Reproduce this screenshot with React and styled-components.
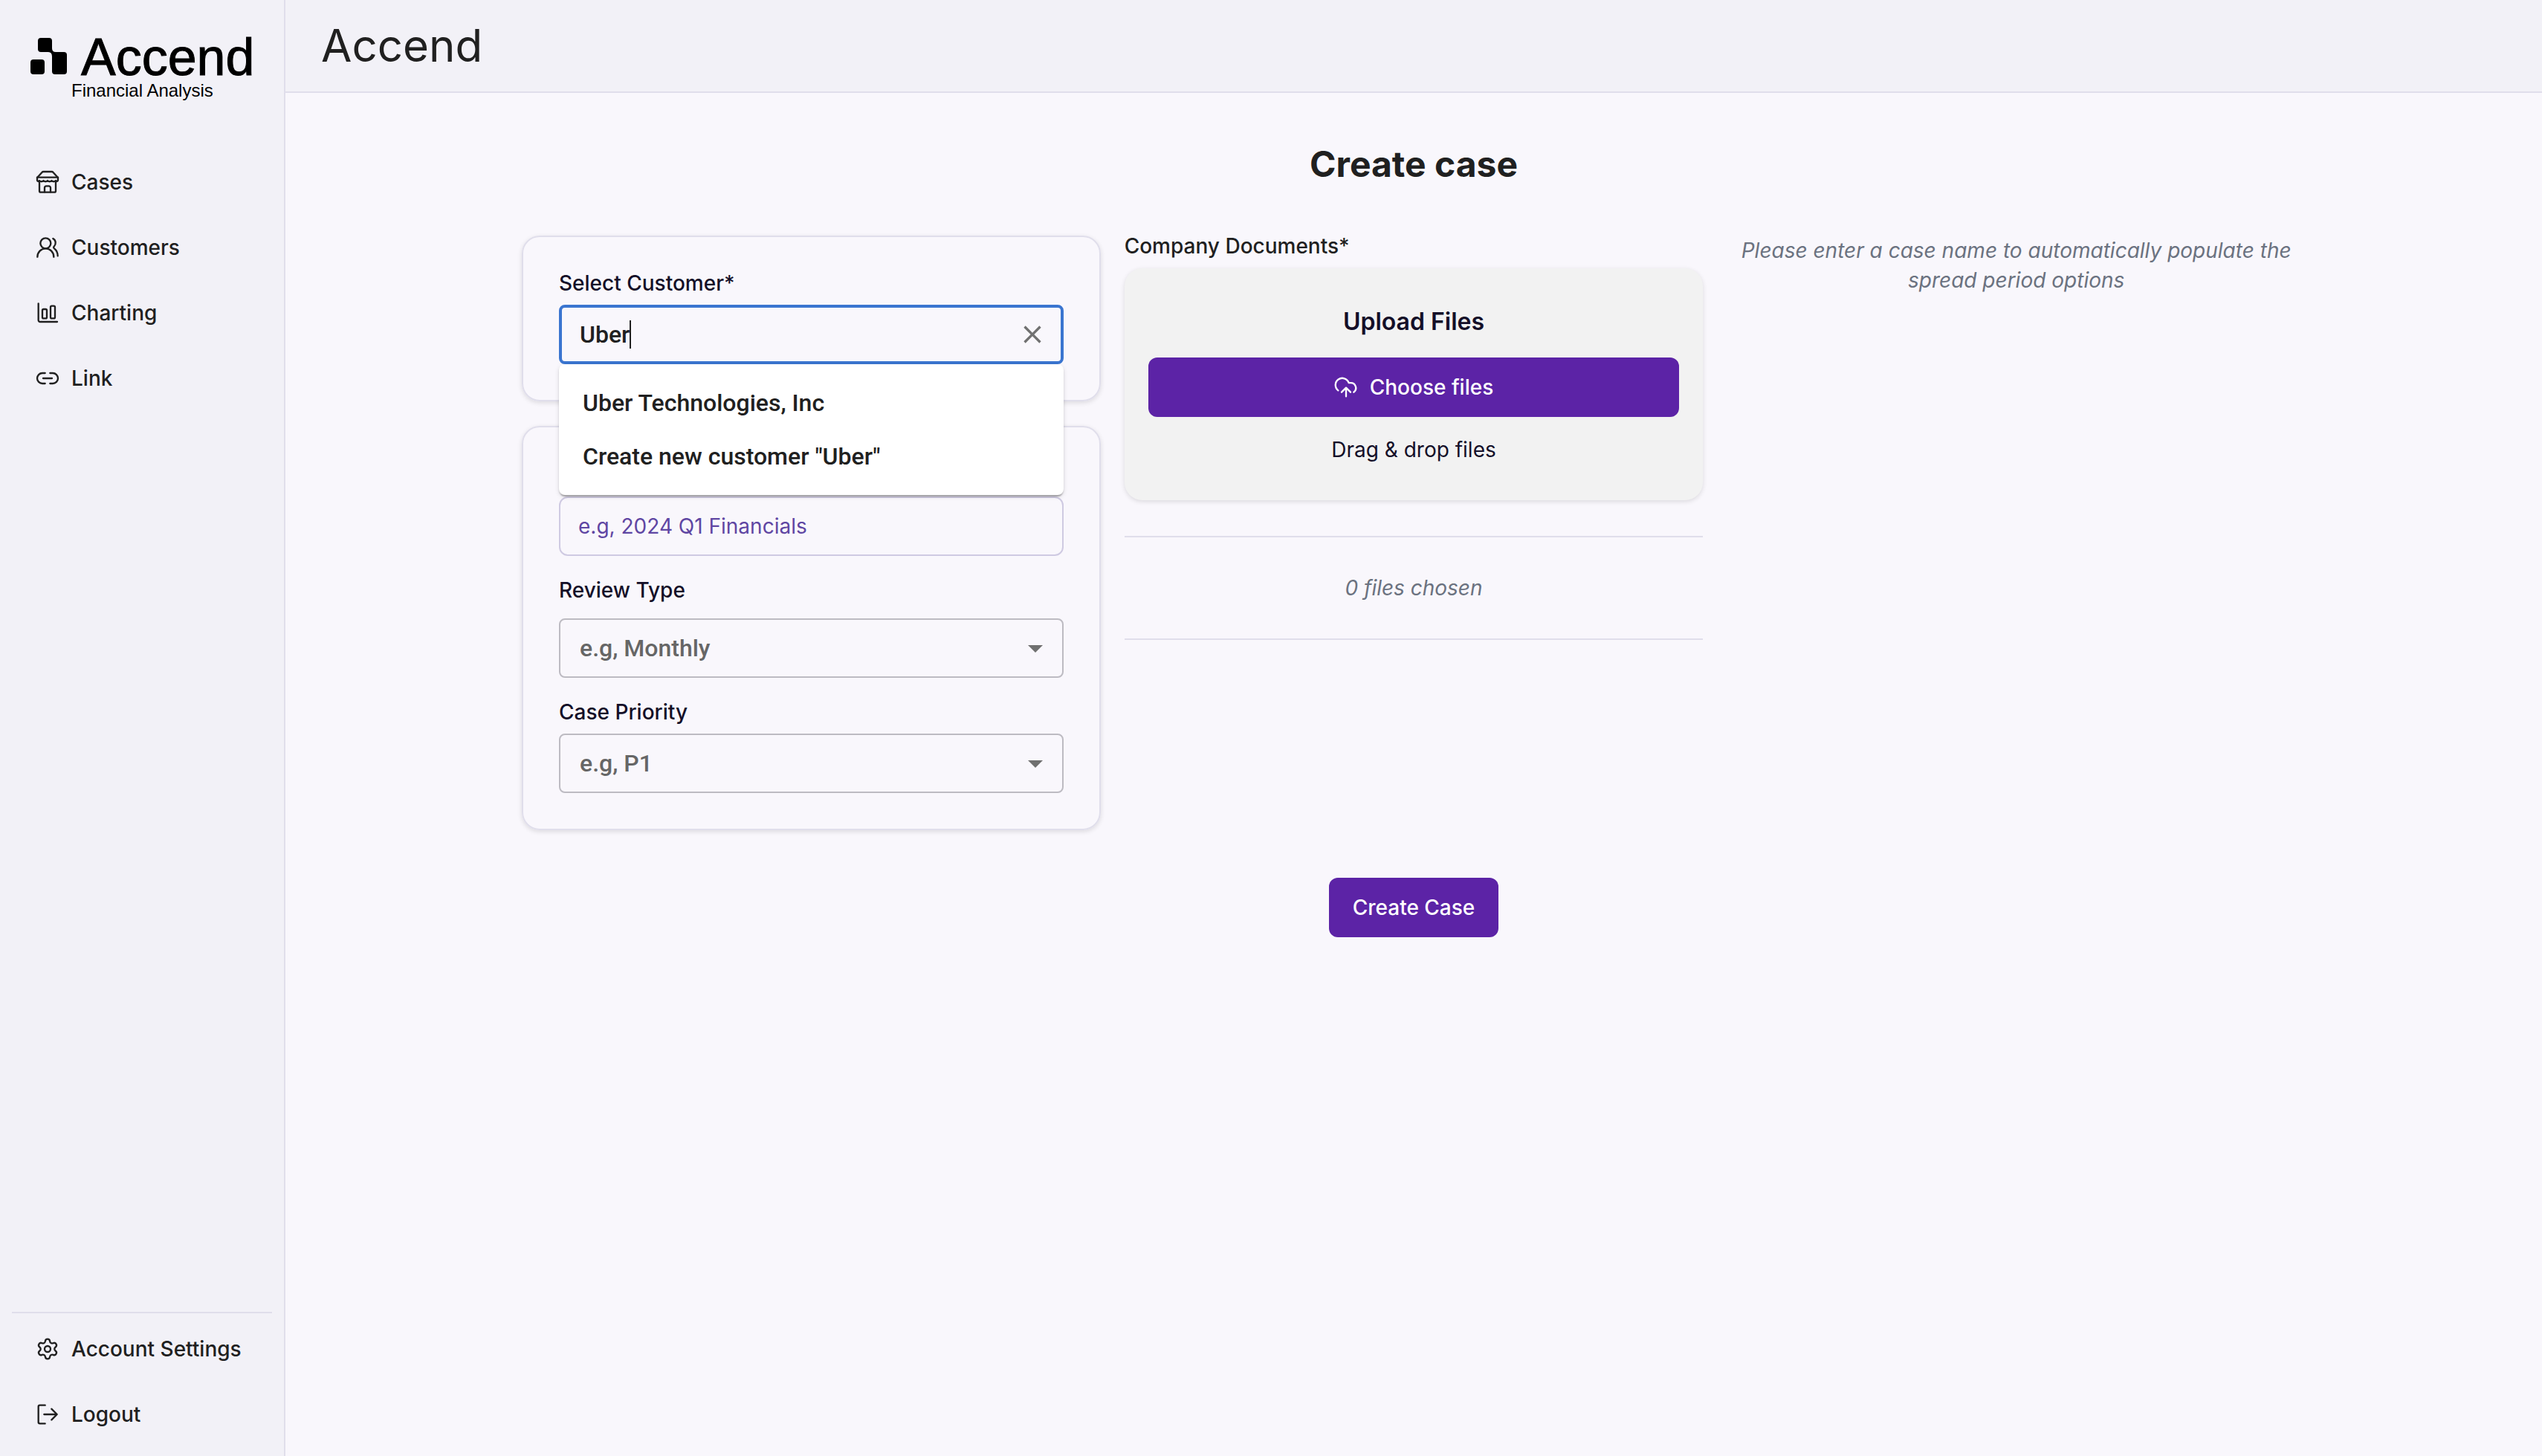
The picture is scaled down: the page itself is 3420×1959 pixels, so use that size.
import React, { useState } from "react";
import styled, { createGlobalStyle } from "styled-components";
import { Settings } from "lucide-react";

const GlobalStyle = createGlobalStyle`
  *, *::before, *::after { box-sizing: border-box; }
  body {
    margin: 0;
    background: #f9f7fc;
    color: #202020;
    font-family: Inter, "Liberation Sans", sans-serif;
    font-size: 28px;
    line-height: 40px;
    font-optical-sizing: none;
  }
  h1, h2, h3, p, ul { margin: 0; padding: 0; }
  input, button, select { font: inherit; font-optical-sizing: none; }
`;

const Shell = styled.div`
  display: flex;
  min-height: 100vh;
`;

const Sidebar = styled.aside`
  display: flex;
  flex-direction: column;
  flex: none;
  width: 384px;
  padding: 48px 16px 24px;
  background: #f2f1f7;
  border-right: 2px solid #e0deeb;
`;

const Brand = styled.div`
  display: grid;
  grid-template-columns: 50px 1fr;
  grid-template-rows: 60px 28px;
  column-gap: 19px;
  padding: 0 24px;
  color: #000;
`;

const BrandName = styled.span`
  font-family: "Liberation Sans", Arial, sans-serif;
  font-size: 70px;
  line-height: 58px;
  -webkit-text-stroke: 1px #000;
`;

const BrandTag = styled.span`
  grid-column: 1 / -1;
  padding-left: 56px;
  font-family: "Liberation Sans", Arial, sans-serif;
  font-size: 24px;
  line-height: 28px;
  white-space: nowrap;
`;

const NavList = styled.nav`
  display: flex;
  flex-direction: column;
  gap: 24px;
  padding: ${(p) => (p.$footer ? "16px 0 0" : "0")};
  margin-top: ${(p) => (p.$footer ? "auto" : "77px")};
  border-top: ${(p) => (p.$footer ? "2px solid #e0deeb" : "none")};
`;

const NavLink = styled.a`
  display: flex;
  align-items: center;
  gap: 16px;
  height: 64px;
  padding: 0 32px;
  color: #202020;
  font-weight: 500;
  text-decoration: none;
  white-space: nowrap;
`;

const Icon = styled.svg.attrs({ viewBox: "0 0 24 24", "aria-hidden": true })`
  flex: none;
  width: 32px;
  height: 32px;
  fill: none;
  stroke: currentColor;
  stroke-width: 1.75;
  stroke-linecap: round;
  stroke-linejoin: round;
`;

const Glyph = styled.svg.attrs({ viewBox: "0 0 24 24", "aria-hidden": true })`
  flex: none;
  width: ${(p) => p.$size}px;
  height: ${(p) => p.$size}px;
  fill: currentColor;
`;

const Main = styled.main`
  display: flex;
  flex-direction: column;
  flex: 1;
  min-width: 0;
`;

const TopBar = styled.header`
  padding: 24px 48px;
  background: #f2f1f7;
  border-bottom: 2px solid #e0deeb;
`;

const AppTitle = styled.h1`
  font-size: 60px;
  font-weight: 400;
  line-height: 75px;
`;

const Content = styled.form`
  display: flex;
  flex-direction: column;
  align-items: center;
  padding: 64px;
`;

const PageTitle = styled.h2`
  font-size: 48px;
  font-weight: 700;
  line-height: 64px;
`;

const Columns = styled.div`
  display: grid;
  grid-template-columns: repeat(3, 1fr);
  gap: 32px;
  width: 100%;
  max-width: 2400px;
  margin: 64px 0;
`;

const Stack = styled.div`
  display: flex;
  flex-direction: column;
  gap: 33px;
`;

const Card = styled.section`
  display: flex;
  flex-direction: column;
  padding: 46px 48px 48px;
  border: 2px solid #e0deeb;
  border-radius: 24px;
  box-shadow: 0 2px 6px rgba(0, 0, 0, 0.12);
`;

const Field = styled.div`
  position: relative;
  display: flex;
  flex-direction: column;
  gap: ${(p) => p.$gap || 13}px;
  margin-bottom: ${(p) => p.$after || 0}px;
`;

const Label = styled.label`
  color: #140f28;
  font-weight: 500;
  line-height: 32px;
`;

const Control = styled.div`
  display: flex;
  align-items: center;
  height: 80px;
  padding: ${(p) => (p.$focused ? "0 18px 0 24px" : "0 12px 0 26px")};
  border: ${(p) => (p.$focused ? "4px solid #3a75d0" : "2px solid #bdbbc2")};
  border-radius: 8px;
  color: #707070;
`;

const Combo = styled.input`
  field-sizing: content;
  min-width: 0;
  padding: 0;
  border: 0;
  outline: 0;
  background: transparent;
  color: #202020;
  caret-color: transparent;
  font-family: Roboto, Inter, sans-serif;
  font-size: 32px;
  font-weight: 500;
`;

const Caret = styled.span`
  flex: none;
  width: 2px;
  height: 38px;
  background: #202020;
`;

const Select = styled.select`
  flex: 1;
  min-width: 0;
  padding: 0;
  border: 0;
  outline: 0;
  appearance: none;
  background: transparent;
  color: #666;
  font-family: Roboto, Inter, sans-serif;
  font-size: 32px;
  font-weight: 500;
`;

const TextInput = styled.input`
  width: 100%;
  height: 80px;
  padding: 0 24px;
  border: 2px solid #cfcae2;
  border-radius: 12px;
  outline: 0;
  background: transparent;
  color: #202020;

  &::placeholder {
    color: #5f46a3;
    opacity: 1;
  }
`;

const ClearButton = styled.button`
  display: flex;
  margin-left: auto;
  padding: 0;
  border: 0;
  background: none;
  color: #707070;
`;

const Options = styled.ul`
  position: absolute;
  top: 100%;
  left: 0;
  right: 0;
  z-index: 2;
  padding: 16px 0;
  border-radius: 8px;
  background: #fff;
  box-shadow: 0 4px 2px -2px rgba(0, 0, 0, 0.2), 0 2px 2px rgba(0, 0, 0, 0.14),
    0 2px 6px rgba(0, 0, 0, 0.12);
  list-style: none;
`;

const Option = styled.li`
  padding: 12px 32px;
  font-family: Roboto, Inter, sans-serif;
  font-size: 32px;
  font-weight: 500;
  line-height: 48px;
`;

const Documents = styled.div`
  display: flex;
  flex-direction: column;
`;

const DocumentsTitle = styled.h3`
  font-size: 28px;
  font-weight: 500;
  line-height: 28px;
`;

const DropZone = styled.section`
  display: flex;
  flex-direction: column;
  align-items: center;
  gap: 24px;
  margin: 16px 0 48px;
  padding: 48px 32px;
  border-radius: 24px;
  background: #f2f2f2;
  color: #140f28;
  box-shadow: 0 2px 6px rgba(0, 0, 0, 0.12);
`;

const DropTitle = styled.h3`
  font-size: 32px;
  font-weight: 600;
  line-height: 48px;
`;

const Button = styled.button`
  display: flex;
  align-items: center;
  justify-content: center;
  gap: 16px;
  width: ${(p) => (p.$block ? "100%" : "auto")};
  height: 80px;
  padding: 0 32px;
  border: 0;
  border-radius: 12px;
  background: #5c23a6;
  color: #fff;
  font-weight: 500;
`;

const Chosen = styled.p`
  padding: 48px 0;
  border: solid #e0deeb;
  border-width: 2px 0;
  color: #6b7280;
  font-style: italic;
  text-align: center;
`;

const Hint = styled.p`
  color: #6b7280;
  font-style: italic;
  text-align: center;
`;

function LogoMark() {
  return (
    <svg width="50" height="56" viewBox="0 0 50 56" aria-hidden="true">
      <rect x="11" y="3" width="19" height="19" rx="4" />
      <rect x="1" y="32" width="19" height="20" rx="4" />
      <rect x="30" y="22" width="20" height="30" rx="4" />
      <path d="M25 22 L30 17 Q30 22 35 22 L30 28 Q30 22 25 22Z" />
    </svg>
  );
}

const ShopIcon = () => (
  <Icon>
    <path d="M3.750 11.250h-.75A1.500 1.500 0 0 1 1.500 9.750V7.500L6.300 2.200A2 2 0 0 1 7.800 1.500h8.400a2 2 0 0 1 1.500.7l4.800 5.300v2.250a1.500 1.500 0 0 1-1.500 1.500h-.75" />
    <path d="M1.500 7.250h21" />
    <path d="M3.750 10.500q2.060 2 4.120 0q2.060 2 4.130 0q2.060 2 4.130 0q2.060 2 4.120 0" />
    <path d="M3.750 11.250v9.500a1.500 1.500 0 0 0 1.500 1.500h13.500a1.500 1.500 0 0 0 1.500-1.500v-9.500" />
    <path d="M9 22v-4.250A1.750 1.750 0 0 1 10.750 16h2.500A1.750 1.750 0 0 1 15 17.750V22" />
  </Icon>
);

const PeopleIcon = () => (
  <Icon>
    <circle cx="10" cy="7.750" r="5.250" />
    <path d="M1.750 21.500a8.250 8.500 0 0 1 16.500 0" />
    <path d="M17.500 3c3 1.600 3.400 5.400 1 8-.6.700-.5 1.300.1 1.800 2.400 1.900 3.650 4.400 3.650 7.700" />
  </Icon>
);

const ChartIcon = () => (
  <Icon>
    <path d="M2.750 2.500v16.750a1.750 1.750 0 0 0 1.750 1.750h17.250" />
    <rect x="6.750" y="8.250" width="4.500" height="9.250" rx="1.250" />
    <rect x="15" y="5" width="4.500" height="12.500" rx="1.250" />
  </Icon>
);

const LinkIcon = () => (
  <Icon>
    <path d="M9.500 17.250h-2.750a5.250 5.250 0 0 1 0-10.500h2.750" />
    <path d="M14.500 6.750h2.750a5.250 5.250 0 0 1 0 10.500h-2.750" />
    <path d="M7.500 12h9" />
  </Icon>
);

const LogoutIcon = () => (
  <Icon>
    <path d="M9.500 2.750H4.250a1.500 1.500 0 0 0-1.500 1.500v15.500a1.500 1.500 0 0 0 1.500 1.500H9.500" />
    <path d="M8.500 12h13M16 6.500l5.500 5.500-5.500 5.500" />
  </Icon>
);

const UploadIcon = () => (
  <Icon>
    <path d="M4 15.250A6.900 6.900 0 1 1 14.750 7.600h1.750A5.200 5.200 0 0 1 19.750 17" />
    <path d="M12 21.250V12.500M7.500 17l4.500-4.500 4.500 4.500" />
  </Icon>
);

const CaretDown = () => (
  <Glyph $size={48}>
    <path d="M7 10l5 5 5-5z" />
  </Glyph>
);

export default function App() {
  const [customer, setCustomer] = useState("Uber");
  return (
    <>
      <GlobalStyle />
      <Shell>
        <Sidebar>
          <Brand>
            <LogoMark />
            <BrandName>Accend</BrandName>
            <BrandTag>Financial Analysis</BrandTag>
          </Brand>
          <NavList>
            <NavLink href="#cases"><ShopIcon />Cases</NavLink>
            <NavLink href="#customers"><PeopleIcon />Customers</NavLink>
            <NavLink href="#charting"><ChartIcon />Charting</NavLink>
            <NavLink href="#link"><LinkIcon />Link</NavLink>
          </NavList>
          <NavList $footer>
            <NavLink href="#settings"><Settings size={32} strokeWidth={1.75} />Account Settings</NavLink>
            <NavLink href="#logout"><LogoutIcon />Logout</NavLink>
          </NavList>
        </Sidebar>
        <Main>
          <TopBar><AppTitle>Accend</AppTitle></TopBar>
          <Content onSubmit={(e) => e.preventDefault()}>
            <PageTitle>Create case</PageTitle>
            <Columns>
              <Stack>
                <Card>
                  <Field>
                    <Label htmlFor="customer">Select Customer*</Label>
                    <Control $focused>
                      <Combo id="customer" value={customer} onChange={(e) => setCustomer(e.target.value)} />
                      <Caret />
                      <ClearButton type="button" aria-label="Clear" onClick={() => setCustomer("")}>
                        <Glyph $size={40}>
                          <path d="M19 6.410L17.590 5 12 10.590 6.410 5 5 6.410 10.590 12 5 17.590 6.410 19 12 13.410 17.590 19 19 17.590 13.410 12z" />
                        </Glyph>
                      </ClearButton>
                    </Control>
                    <Options>
                      <Option>Uber Technologies, Inc</Option>
                      <Option>Create new customer "Uber"</Option>
                    </Options>
                  </Field>
                </Card>
                <Card>
                  <Field $gap={15} $after={30}>
                    <Label htmlFor="name">Case Name*</Label>
                    <TextInput id="name" placeholder="e.g, 2024 Q1 Financials" />
                  </Field>
                  <Field $gap={22} $after={30}>
                    <Label htmlFor="review">Review Type</Label>
                    <Control>
                      <Select id="review"><option>e.g, Monthly</option></Select>
                      <CaretDown />
                    </Control>
                  </Field>
                  <Field>
                    <Label htmlFor="priority">Case Priority</Label>
                    <Control>
                      <Select id="priority"><option>e.g, P1</option></Select>
                      <CaretDown />
                    </Control>
                  </Field>
                </Card>
              </Stack>
              <Documents>
                <DocumentsTitle>Company Documents*</DocumentsTitle>
                <DropZone>
                  <DropTitle>Upload Files</DropTitle>
                  <Button type="button" $block><UploadIcon />Choose files</Button>
                  <p>Drag &amp; drop files</p>
                </DropZone>
                <Chosen>0 files chosen</Chosen>
              </Documents>
              <Hint>Please enter a case name to automatically populate the spread period options</Hint>
            </Columns>
            <Button type="submit">Create Case</Button>
          </Content>
        </Main>
      </Shell>
    </>
  );
}
